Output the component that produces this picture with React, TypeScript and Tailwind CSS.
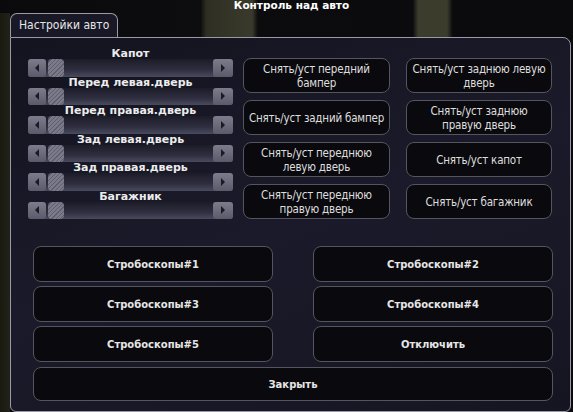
import React from "react";

const sliders = [
  "Капот",
  "Перед левая.дверь",
  "Перед правая.дверь",
  "Зад левая.дверь",
  "Зад правая.дверь",
  "Багажник",
];

const parts = [
  ["Снять/уст передний", "бампер"],
  ["Снять/уст заднюю левую", "дверь"],
  ["Снять/уст задний бампер"],
  ["Снять/уст заднюю", "правую дверь"],
  ["Снять/уст переднюю", "левую дверь"],
  ["Снять/уст капот"],
  ["Снять/уст переднюю", "правую дверь"],
  ["Снять/уст багажник"],
];

const strobes = [
  "Стробоскопы#1",
  "Стробоскопы#2",
  "Стробоскопы#3",
  "Стробоскопы#4",
  "Стробоскопы#5",
  "Отключить",
];

const cond = { fontFamily: '"DejaVu Sans Condensed", "DejaVu Sans", sans-serif' };

function Slider({ label }: { label: string }) {
  return (
    <div className="flex flex-col items-center">
      <div className="h-[11px] text-[11px] leading-[11px] font-bold text-[#ececec]">
        {label}
      </div>
      <div className="flex h-[17.5px] w-full items-stretch rounded-[3px] bg-[linear-gradient(to_bottom,#1c1c28,#2e2e40_60%,#4a4a5e)]">
        <div className="flex w-[18px] items-center justify-center rounded-[3px] bg-[linear-gradient(to_bottom,#7c7c8c,#5a5a6a)]">
          <div className="h-0 w-0 border-y-[4px] border-r-[4px] border-y-transparent border-r-[#1a1a22]" />
        </div>
        <div className="ml-[2px] w-[16px] rounded-[4px] bg-[repeating-linear-gradient(135deg,#7a7a8a_0px,#7a7a8a_2px,#5e5e6e_2px,#5e5e6e_3px)]" />
        <div className="flex-1" />
        <div className="flex w-[20px] items-center justify-center rounded-[3px] bg-[linear-gradient(to_bottom,#7c7c8c,#5a5a6a)]">
          <div className="h-0 w-0 border-y-[4px] border-l-[4px] border-y-transparent border-l-[#1a1a22]" />
        </div>
      </div>
    </div>
  );
}

export default function App() {
  return (
    <div
      className="flex h-[412px] w-[573px] flex-col overflow-hidden bg-[linear-gradient(to_right,#0a0a0c_0%,#0d0d10_35%,#2e2e22_36%,#3a3a2c_44%,#0c0c0e_45%,#0b0b0d_72%,#3c3c2c_73%,#3c3c2c_78%,#0b0b0d_79%)]"
      style={{ fontFamily: '"DejaVu Sans", "Liberation Sans", sans-serif' }}
    >
      <div className="h-[13px] pl-[10px] text-center text-[10.5px] leading-[11px] font-bold text-white">
        Контроль над авто
      </div>
      <div className="flex flex-1 bg-[linear-gradient(to_right,#1a1a10_0px,#22221a_10px,transparent_10px)]">
        <div className="ml-[10px] flex w-[561px] flex-col">
          <div className="flex">
            <div
              className="h-[24px] w-[108px] whitespace-nowrap rounded-t-[7px] border border-b-0 border-[#9a9aa6] bg-[#181826] pl-[8px] text-[12px] leading-[23px] text-[#e6e6e6]"
              style={cond}
            >
              Настройки авто
            </div>
          </div>
          <div className="flex flex-1 flex-col rounded-b-[6px] rounded-tr-[8px] border border-[#9a9aa6] bg-[linear-gradient(160deg,#141420,#1a1a2a_50%,#151522)] px-[17px] pt-[10px]">
            <div className="flex gap-[10px]">
              <div className="flex w-[205px] flex-col">
                {sliders.map((s) => (
                  <Slider key={s} label={s} />
                ))}
              </div>
              <div className="mt-[10px] grid grid-cols-[147px_146px] gap-x-[16px] gap-y-[7px]">
                {parts.map((p) => (
                  <button
                    key={p.join(" ")}
                    className="flex h-[35px] flex-col items-center justify-center rounded-[8px] border border-[#55555f] bg-[#0a0a0e] text-center text-[11.5px] leading-[14px] whitespace-nowrap tracking-[-0.2px] text-[#dedede]"
                    style={cond}
                  >
                    {p.map((line) => (
                      <span key={line}>{line}</span>
                    ))}
                  </button>
                ))}
              </div>
            </div>
            <div className="mt-[27px] ml-[5px] grid grid-cols-2 gap-x-[40px] gap-y-[4px]">
              {strobes.map((s) => (
                <button
                  key={s}
                  className="h-[36px] rounded-[8px] border border-[#55555f] bg-[#0a0a0e] text-[10px] font-bold text-[#e6e6e6]"
                >
                  {s}
                </button>
              ))}
              <button className="col-span-2 mt-[1px] h-[34px] rounded-[8px] border border-[#55555f] bg-[#0a0a0e] text-[10px] font-bold text-[#e6e6e6]">
                Закрыть
              </button>
            </div>
          </div>
        </div>
      </div>
    </div>
  );
}
